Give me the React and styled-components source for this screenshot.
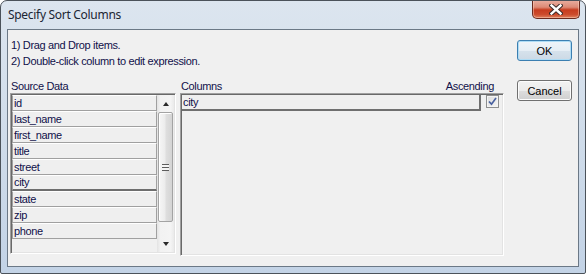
import React from "react";
import styled, { createGlobalStyle, css } from "styled-components";

const SOURCE = ["id", "last_name", "first_name", "title", "street", "city", "state", "zip", "phone"];
const USED = ["city"];

export default function App() {
    return (
        <>
            <GlobalStyle />
            <Window>
                <TitleBar>
                    <Title>Specify Sort Columns</Title>
                    <CloseButton>
                        <svg width="14" height="11" viewBox="0 0 14 11">
                            <path d="M2.5 1.5 L11.5 9.5 M11.5 1.5 L2.5 9.5" stroke="#3b2a28" strokeWidth="4.4" strokeLinecap="square" />
                            <path d="M2.5 1.5 L11.5 9.5 M11.5 1.5 L2.5 9.5" stroke="#fff" strokeWidth="2.4" strokeLinecap="square" />
                        </svg>
                    </CloseButton>
                </TitleBar>
                <Frame>
                    <Client>
                        <Main>
                            <Instructions>
                                <div>1) Drag and Drop items.</div>
                                <div>2) Double-click column to edit expression.</div>
                            </Instructions>
                            <Panels>
                                <Label>Source Data</Label>
                                <ColumnsHeader>
                                    <span>Columns</span>
                                    <span>Ascending</span>
                                </ColumnsHeader>
                                <SourceBox>
                                    <Items>
                                        {SOURCE.map((name) => (
                                            <SourceItem key={name} $used={USED.includes(name)}>{name}</SourceItem>
                                        ))}
                                    </Items>
                                    <ScrollBar>
                                        <ArrowButton><Arrow $dir="up" /></ArrowButton>
                                        <Track>
                                            <Thumb><Grip /></Thumb>
                                        </Track>
                                        <ArrowButton><Arrow $dir="down" /></ArrowButton>
                                    </ScrollBar>
                                </SourceBox>
                                <ColumnsBox>
                                    {USED.map((name) => (
                                        <ColumnRow key={name}>
                                            <ColumnItem>{name}</ColumnItem>
                                            <CheckBox>
                                                <svg width="9" height="9" viewBox="0 0 9 9">
                                                    <path d="M1 4.5 L3.5 7.2 L8 1" fill="none" stroke="#4a62a0" strokeWidth="1.7" />
                                                </svg>
                                            </CheckBox>
                                        </ColumnRow>
                                    ))}
                                </ColumnsBox>
                            </Panels>
                        </Main>
                        <Buttons>
                            <Button $default>OK</Button>
                            <Button>Cancel</Button>
                        </Buttons>
                    </Client>
                </Frame>
            </Window>
        </>
    );
}

const GlobalStyle = createGlobalStyle`
    html, body {
        margin: 0;
        padding: 0;
        background: #ffffff;
    }
    body {
        font-family: "Liberation Sans", Arial, sans-serif;
    }
`;

const Window = styled.div`
    width: 586px;
    height: 274px;
    box-sizing: border-box;
    border: 1px solid #4b525a;
    border-radius: 7px 7px 2px 2px;
    background: linear-gradient(#dce5ef, #d2deeb 40%, #c3d3e6);
    display: flex;
    flex-direction: column;
    overflow: hidden;
`;

const TitleBar = styled.div`
    height: 28px;
    display: flex;
    justify-content: space-between;
    align-items: flex-start;
    padding-left: 7px;
`;

const Title = styled.span`
    font-family: "Noto Sans", "Open Sans", sans-serif;
    font-size: 12px;
    letter-spacing: -0.3px;
    line-height: 28px;
    color: #1b2633;
`;

const CloseButton = styled.div`
    margin-top: -1px;
    margin-right: 5px;
    width: 48px;
    height: 19px;
    box-sizing: border-box;
    border: 1px solid #6a2a1e;
    border-top: none;
    border-radius: 0 0 5px 5px;
    background: linear-gradient(#eab0a2 0%, #dc8a76 40%, #c73c1f 55%, #cc4b2c 80%, #de7f5e 100%);
    box-shadow: inset 0 0 0 1px rgba(255, 220, 200, 0.45);
    display: flex;
    align-items: center;
    justify-content: center;
`;

const Frame = styled.div`
    flex: 1;
    display: flex;
    padding: 0 6px 6px;
`;

const Client = styled.div`
    flex: 1;
    display: flex;
    border: 1px solid #6b7886;
    background: #f0f0f0;
    font-size: 11px;
    letter-spacing: -0.35px;
    color: #10104a;
`;

const Main = styled.div`
    display: flex;
    flex-direction: column;
`;

const Instructions = styled.div`
    margin: 7px 0 0 3px;
    line-height: 16px;
`;

const Panels = styled.div`
    margin: 10px 0 0 2px;
    display: grid;
    grid-template-columns: 166px 324px;
    grid-template-rows: 14px auto;
    column-gap: 4px;
    align-items: start;
`;

const Label = styled.div`
    line-height: 14px;
    padding-left: 1px;
`;

const ColumnsHeader = styled(Label)`
    display: flex;
    justify-content: space-between;
    padding-right: 10px;
`;

const sunken = css`
    box-sizing: border-box;
    border: 1px solid;
    border-color: #a0a0a0 #ffffff #ffffff #a0a0a0;
    box-shadow: inset 1px 1px 0 #696969, inset -1px -1px 0 #e3e3e3;
    padding: 1px;
`;

const SourceBox = styled.div`
    ${sunken};
    height: 161px;
    display: flex;
`;

const Items = styled.div`
    flex: 1;
    display: flex;
    flex-direction: column;
`;

const SourceItem = styled.div`
    height: 16px;
    box-sizing: border-box;
    border: 1px solid;
    border-color: #ffffff #a0a0a0 #a0a0a0 #a0a0a0;
    padding-left: 1px;
    line-height: 14px;
    background: #efefef;
    ${(p) => p.$used && css`
        border-bottom: 2px solid #6e6e6e;
        line-height: 13px;
    `}
`;

const ScrollBar = styled.div`
    width: 17px;
    display: flex;
    flex-direction: column;
    background: linear-gradient(to right, #e3e3e3, #f2f2f2 20%, #f4f4f4 80%, #eaeaea);
`;

const ArrowButton = styled.div`
    height: 17px;
    display: flex;
    align-items: center;
    justify-content: center;
`;

const Arrow = styled.div`
    width: 0;
    height: 0;
    border-left: 3.5px solid transparent;
    border-right: 3.5px solid transparent;
    ${(p) => p.$dir === "up"
        ? css`border-bottom: 4px solid #2a2a2a;`
        : css`border-top: 4px solid #2a2a2a;`}
`;

const Track = styled.div`
    flex: 1;
    display: flex;
    flex-direction: column;
`;

const Thumb = styled.div`
    height: 110px;
    margin: 0 1px;
    box-sizing: border-box;
    border: 1px solid #a3a3a3;
    border-radius: 2px;
    background: linear-gradient(to right, #f6f6f6, #ececec 45%, #dedede 55%, #d4d4d4);
    box-shadow: inset 1px 1px 0 #ffffff;
    display: flex;
    align-items: center;
    justify-content: center;
`;

const Grip = styled.div`
    width: 7px;
    height: 7px;
    background: repeating-linear-gradient(#5c5c5c 0 1px, #f4f4f4 1px 3px);
`;

const ColumnsBox = styled.div`
    ${sunken};
    height: 163px;
`;

const ColumnRow = styled.div`
    display: flex;
    align-items: flex-start;
`;

const ColumnItem = styled.div`
    width: 299px;
    height: 16px;
    box-sizing: border-box;
    border-right: 2px solid #6f6f6f;
    border-bottom: 2px solid #6f6f6f;
    padding-left: 1px;
    line-height: 14px;
    background: #efefef;
`;

const CheckBox = styled.div`
    margin-left: 5px;
    width: 13px;
    height: 13px;
    box-sizing: border-box;
    border: 1px solid #8e8f8f;
    background: linear-gradient(135deg, #dcdcdc, #f6f6f6);
    box-shadow: inset 0 0 0 1px #f4f4f4;
    display: flex;
    align-items: center;
    justify-content: center;
`;

const Buttons = styled.div`
    margin: 10px 6px 0 auto;
    display: flex;
    flex-direction: column;
    gap: 19px;
`;

const Button = styled.div`
    width: 55px;
    height: 21px;
    box-sizing: border-box;
    border: 1px solid #707070;
    border-radius: 3px;
    background: linear-gradient(#f2f2f2 0%, #ebebeb 50%, #dddddd 51%, #cfcfcf 100%);
    box-shadow: inset 0 0 0 1px #fcfcfc;
    display: flex;
    align-items: center;
    justify-content: center;
    color: #000000;
    letter-spacing: 0;
    ${(p) => p.$default && css`
        border-color: #3c7fb1;
        background: linear-gradient(#eef4f9 0%, #e6eef5 50%, #d6e2ec 51%, #ccd9e5 100%);
        box-shadow: inset 0 0 0 1px #aedcf5;
    `}
`;
